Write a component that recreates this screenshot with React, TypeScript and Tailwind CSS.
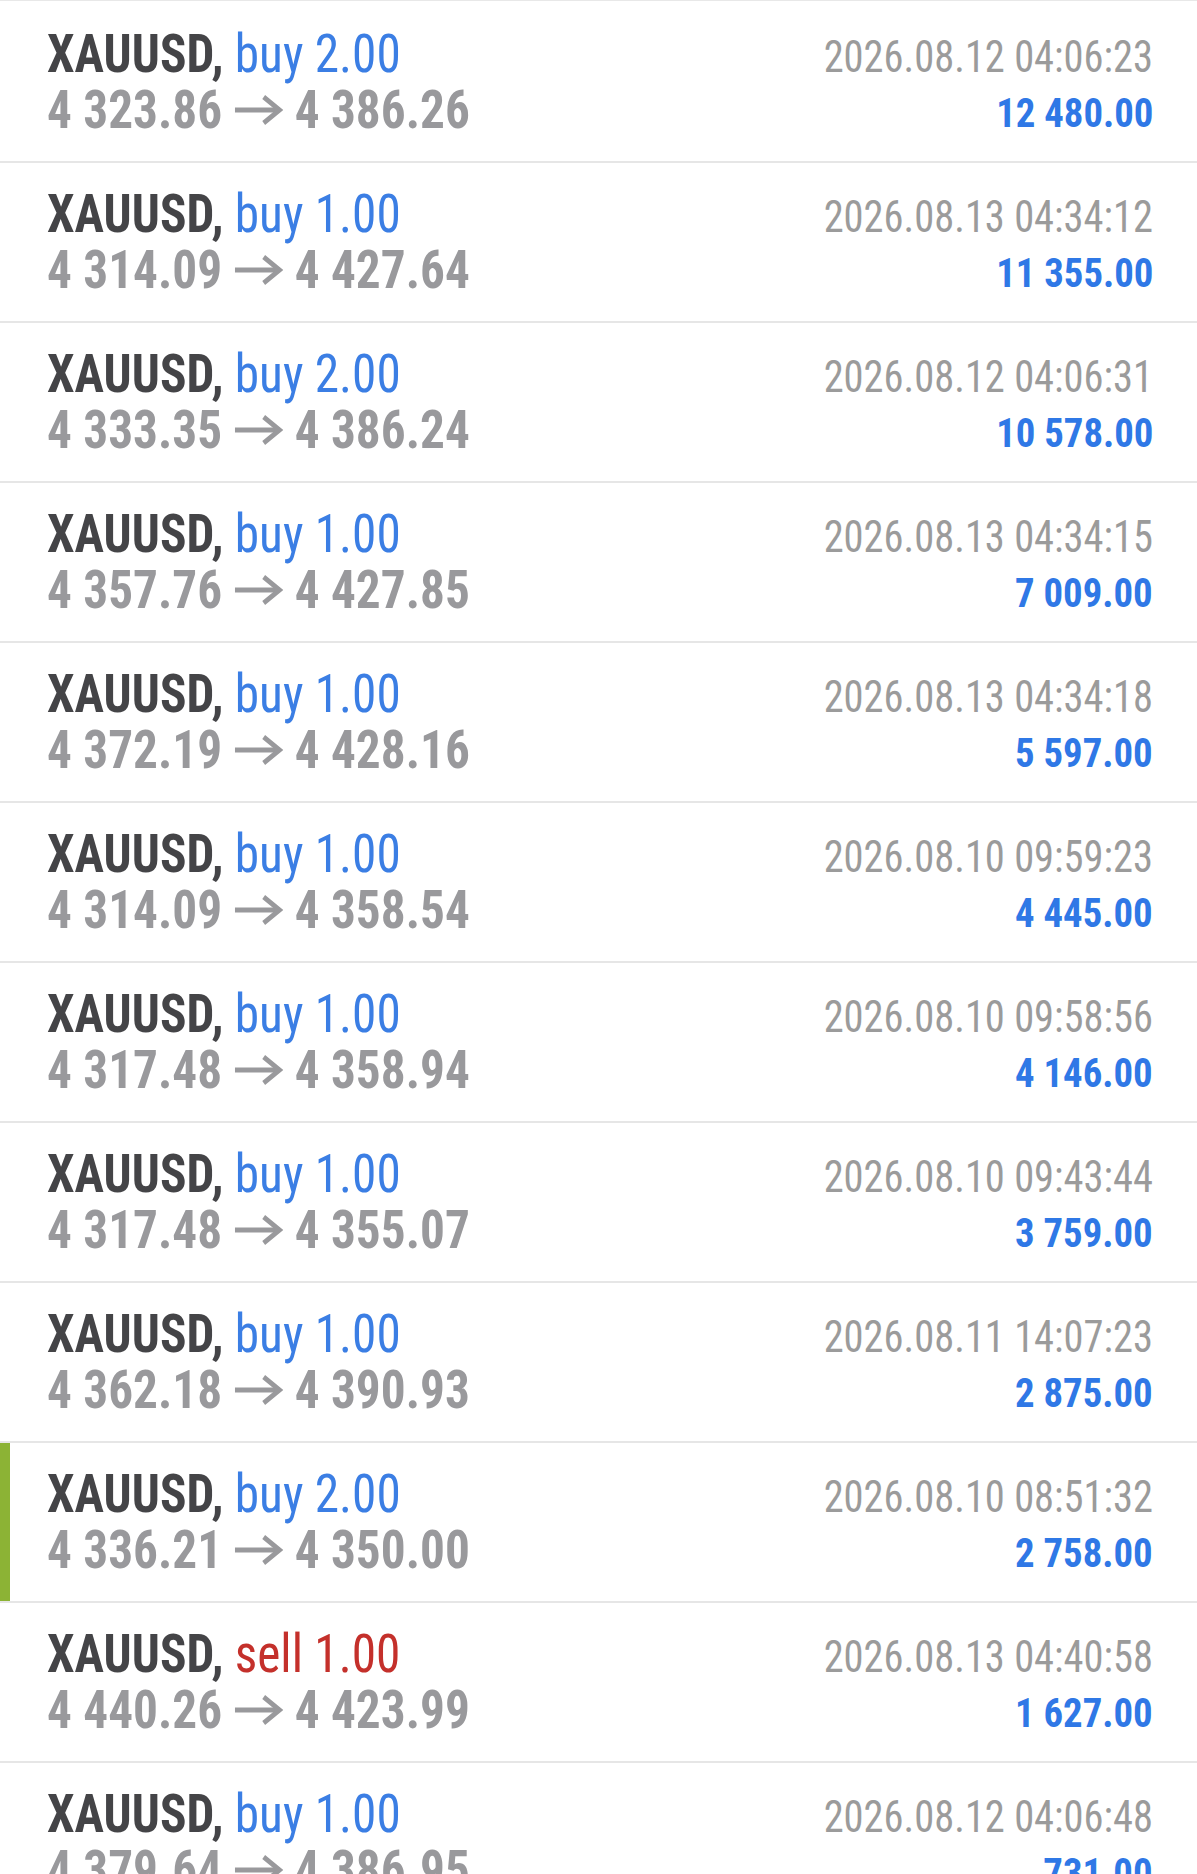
import React from "react";

type Row = {
  side: "buy" | "sell";
  vol: string;
  open: string;
  close: string;
  time: string;
  profit: string;
  mark?: boolean;
};

const rows: Row[] = [
  { side: "buy", vol: "2.00", open: "4 323.86", close: "4 386.26", time: "2026.08.12 04:06:23", profit: "12 480.00" },
  { side: "buy", vol: "1.00", open: "4 314.09", close: "4 427.64", time: "2026.08.13 04:34:12", profit: "11 355.00" },
  { side: "buy", vol: "2.00", open: "4 333.35", close: "4 386.24", time: "2026.08.12 04:06:31", profit: "10 578.00" },
  { side: "buy", vol: "1.00", open: "4 357.76", close: "4 427.85", time: "2026.08.13 04:34:15", profit: "7 009.00" },
  { side: "buy", vol: "1.00", open: "4 372.19", close: "4 428.16", time: "2026.08.13 04:34:18", profit: "5 597.00" },
  { side: "buy", vol: "1.00", open: "4 314.09", close: "4 358.54", time: "2026.08.10 09:59:23", profit: "4 445.00" },
  { side: "buy", vol: "1.00", open: "4 317.48", close: "4 358.94", time: "2026.08.10 09:58:56", profit: "4 146.00" },
  { side: "buy", vol: "1.00", open: "4 317.48", close: "4 355.07", time: "2026.08.10 09:43:44", profit: "3 759.00" },
  { side: "buy", vol: "1.00", open: "4 362.18", close: "4 390.93", time: "2026.08.11 14:07:23", profit: "2 875.00" },
  { side: "buy", vol: "2.00", open: "4 336.21", close: "4 350.00", time: "2026.08.10 08:51:32", profit: "2 758.00", mark: true },
  { side: "sell", vol: "1.00", open: "4 440.26", close: "4 423.99", time: "2026.08.13 04:40:58", profit: "1 627.00" },
  { side: "buy", vol: "1.00", open: "4 379.64", close: "4 386.95", time: "2026.08.12 04:06:48", profit: "731.00" },
];

function Arrow() {
  return (
    <svg
      width="52"
      height="30"
      viewBox="0 0 52 30"
      className="inline-block relative top-[-4px] ml-[14px] mr-[12px]"
      aria-label="→"
    >
      <line x1="0" y1="15" x2="48" y2="15" stroke="#99999c" strokeWidth="4.8" />
      <polyline
        points="31,2 48,15 31,28"
        fill="none"
        stroke="#99999c"
        strokeWidth="5"
        strokeLinejoin="miter"
      />
    </svg>
  );
}

function TradeRow({ r }: { r: Row }) {
  return (
    <div className="flex h-[160px] border-b-2 border-[#e6e6e6] bg-white shrink-0">
      <div className={r.mark ? "w-[10px] bg-[#8cb335]" : "w-[10px]"} />
      <div className="flex flex-1 justify-between pl-[37px] pr-[44px]">
        <div className="flex flex-col pt-[24px]">
          <div className="text-[53px] leading-[55px] whitespace-nowrap origin-left scale-x-[0.93]">
            <span className="font-bold text-[#444447]">XAUUSD,</span>{" "}
            <span className={r.side === "buy" ? "text-[#3b7ee4]" : "text-[#c4302b]"}>
              {r.side} {r.vol}
            </span>
          </div>
          <div className="text-[53px] leading-[56px] font-bold text-[#99999c] whitespace-nowrap origin-left scale-x-[0.93]">
            <span>{r.open}</span>
            <Arrow />
            <span>{r.close}</span>
          </div>
        </div>
        <div className="flex flex-col items-end pt-[27px]">
          <div className="text-[44px] leading-[55px] text-[#9b9b9b] whitespace-nowrap origin-right scale-x-[0.92]">
            {r.time}
          </div>
          <div className="text-[41px] leading-[56px] font-bold text-[#2f78e6] whitespace-nowrap origin-right scale-x-[0.945]">
            {r.profit}
          </div>
        </div>
      </div>
    </div>
  );
}

export default function App() {
  return (
    <div
      className="w-[1197px] h-[1874px] overflow-hidden bg-white border-t border-[#e8e8e8] pt-[2px] flex flex-col"
      style={{ fontFamily: "'Roboto Condensed', Roboto, sans-serif" }}
    >
      {rows.map((r, i) => (
        <TradeRow key={i} r={r} />
      ))}
    </div>
  );
}
